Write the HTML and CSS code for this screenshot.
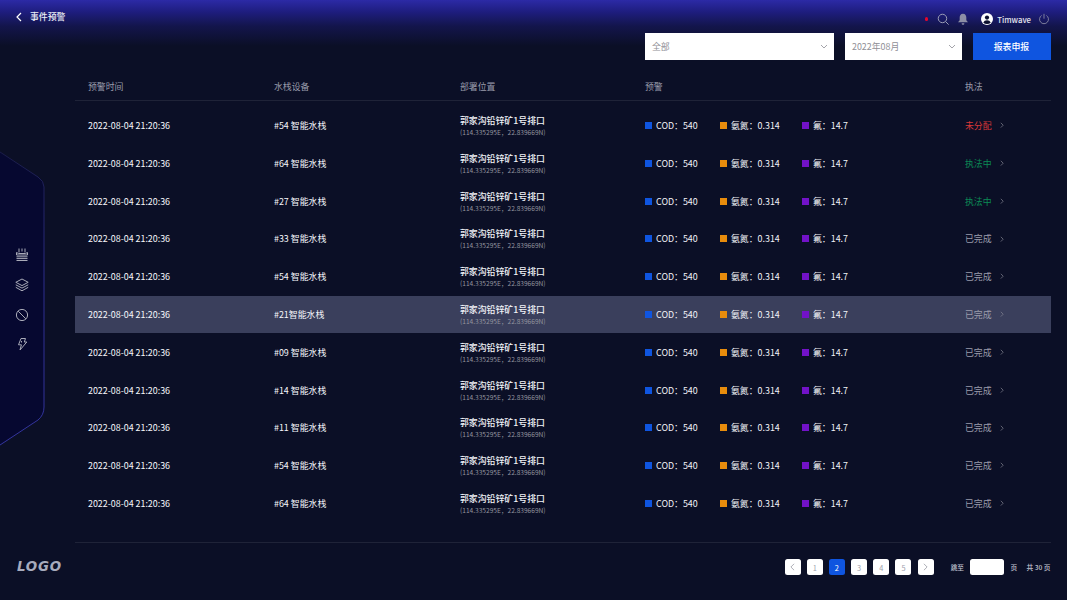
FILE: index.html
```html
<!DOCTYPE html>
<html lang="zh-CN">
<head>
<meta charset="utf-8">
<title>事件预警</title>
<link rel="stylesheet" href="styles.css">
</head>
<body>
<div class="page">
  <aside class="side">
    <svg class="side-shape" width="46" height="300" viewBox="0 0 46 300">
      <defs><linearGradient id="sideStroke" x1="0" y1="0" x2="0" y2="1"><stop offset="0" stop-color="#1a1c48"/><stop offset="0.45" stop-color="#2c2d8c"/><stop offset="1" stop-color="#33349e"/></linearGradient></defs>
      <path d="M0 1 L38 26 Q44 30 44 36 L44 256 Q44 264 38 269 L0 294 Z" fill="#060830"/>
      <path d="M0 1 L38 26 Q44 30 44 36 L44 256 Q44 264 38 269 L0 294" fill="none" stroke="url(#sideStroke)" stroke-width="1"/>
    </svg>
    <nav class="side-icons">
      <svg class="side-icon" viewBox="0 0 14 14"><path d="M4 0.5V4.5M7 0.5V3.5M10 0.5V4.5M1.5 4.5L3.5 5.5H10.5L12.5 4.5V7H1.5ZM1.5 8.8H12.5M1.5 10.6H12.5M1.5 12.5H12.5" /></svg>
      <svg class="side-icon" viewBox="0 0 14 14"><path d="M7 1L13.2 4.3L7 7.6L0.8 4.3ZM0.8 6.8L7 10.1L13.2 6.8M0.8 9.3L7 12.8L13.2 9.3"/></svg>
      <svg class="side-icon" viewBox="0 0 14 14"><circle cx="7" cy="7" r="5.6"/><path d="M3.2 3.2L10.8 10.8"/></svg>
      <svg class="side-icon" viewBox="0 0 14 14"><path d="M6 1.5H10.5L9.3 5H11.8L5 13L6.4 7.8H3.5Z M6.5 4V5.5"/></svg>
    </nav>
    <div class="logo">LOGO</div>
  </aside>
  <div class="main-wrap">
    <header class="top">
      <div class="top-left">
        <svg class="back" viewBox="0 0 8 10"><path d="M6 1L2 5L6 9"/></svg>
        <span class="title">事件预警</span>
      </div>
      <div class="top-right">
        <span class="dot"></span>
        <svg class="ti" viewBox="0.5 0.5 12.5 12.5"><circle cx="6.2" cy="6.2" r="4.4"/><path d="M9.5 9.5L12.6 12.6"/></svg>
        <svg class="ti bell" viewBox="0.5 0.5 13 13"><path d="M7 1.2C9.6 1.2 10.6 3.2 10.6 5.4V8.4L12.4 10.6H1.6L3.4 8.4V5.4C3.4 3.2 4.4 1.2 7 1.2ZM5.6 11.6H8.4V12.2C8.4 13 7.8 13.2 7 13.2C6.2 13.2 5.6 13 5.6 12.2Z"/></svg>
        <svg class="avatar" viewBox="0 0 12 12"><circle cx="6" cy="6" r="6" fill="#fff"/><circle cx="6" cy="4.6" r="2.1" fill="#0c1030"/><path d="M2.3 9.8C2.9 7.9 4.2 7.2 6 7.2C7.8 7.2 9.1 7.9 9.7 9.8C8.7 10.6 7.4 11 6 11C4.6 11 3.3 10.6 2.3 9.8Z" fill="#0c1030"/></svg>
        <span class="user">Timwave</span>
        <svg class="ti power" viewBox="0 0 14 14"><path d="M4.2 2.9A5.2 5.2 0 1 0 9.8 2.9M7 1V6.6"/></svg>
      </div>
    </header>
    <main class="main">
      <div class="controls">
        <div class="select sel-wide"><span>全部</span><svg class="caret" viewBox="0 0 8 5"><path d="M1 1L4 4L7 1"/></svg></div>
        <div class="select sel-date"><span>2022年08月</span><svg class="caret" viewBox="0 0 8 5"><path d="M1 1L4 4L7 1"/></svg></div>
        <button class="report">报表申报</button>
      </div>
      <div class="thead grid"><span>预警时间</span><span>水栈设备</span><span>部署位置</span><span>预警</span><span>执法</span></div>
      <div class="tbody">
        <div class="row grid"><span class="cell">2022-08-04 21:20:36</span><span class="cell">#54 智能水栈</span><div><div class="loc">郭家沟铅锌矿1号排口</div><div class="coord">(114.335295E，22.839669N)</div></div><div class="alerts"><span class="al al1"><i class="sq blue"></i>COD：540</span><span class="al al2"><i class="sq orange"></i>氨氮：0.314</span><span class="al"><i class="sq purple"></i>氟：14.7</span></div><div class="st"><span class="s s-red">未分配</span><svg class="chev" viewBox="0 0 5 8"><path d="M1 1L4 4L1 7"/></svg></div></div>
        <div class="row grid"><span class="cell">2022-08-04 21:20:36</span><span class="cell">#64 智能水栈</span><div><div class="loc">郭家沟铅锌矿1号排口</div><div class="coord">(114.335295E，22.839669N)</div></div><div class="alerts"><span class="al al1"><i class="sq blue"></i>COD：540</span><span class="al al2"><i class="sq orange"></i>氨氮：0.314</span><span class="al"><i class="sq purple"></i>氟：14.7</span></div><div class="st"><span class="s s-green">执法中</span><svg class="chev" viewBox="0 0 5 8"><path d="M1 1L4 4L1 7"/></svg></div></div>
        <div class="row grid"><span class="cell">2022-08-04 21:20:36</span><span class="cell">#27 智能水栈</span><div><div class="loc">郭家沟铅锌矿1号排口</div><div class="coord">(114.335295E，22.839669N)</div></div><div class="alerts"><span class="al al1"><i class="sq blue"></i>COD：540</span><span class="al al2"><i class="sq orange"></i>氨氮：0.314</span><span class="al"><i class="sq purple"></i>氟：14.7</span></div><div class="st"><span class="s s-green">执法中</span><svg class="chev" viewBox="0 0 5 8"><path d="M1 1L4 4L1 7"/></svg></div></div>
        <div class="row grid"><span class="cell">2022-08-04 21:20:36</span><span class="cell">#33 智能水栈</span><div><div class="loc">郭家沟铅锌矿1号排口</div><div class="coord">(114.335295E，22.839669N)</div></div><div class="alerts"><span class="al al1"><i class="sq blue"></i>COD：540</span><span class="al al2"><i class="sq orange"></i>氨氮：0.314</span><span class="al"><i class="sq purple"></i>氟：14.7</span></div><div class="st"><span class="s">已完成</span><svg class="chev" viewBox="0 0 5 8"><path d="M1 1L4 4L1 7"/></svg></div></div>
        <div class="row grid"><span class="cell">2022-08-04 21:20:36</span><span class="cell">#54 智能水栈</span><div><div class="loc">郭家沟铅锌矿1号排口</div><div class="coord">(114.335295E，22.839669N)</div></div><div class="alerts"><span class="al al1"><i class="sq blue"></i>COD：540</span><span class="al al2"><i class="sq orange"></i>氨氮：0.314</span><span class="al"><i class="sq purple"></i>氟：14.7</span></div><div class="st"><span class="s">已完成</span><svg class="chev" viewBox="0 0 5 8"><path d="M1 1L4 4L1 7"/></svg></div></div>
        <div class="row grid active"><span class="cell">2022-08-04 21:20:36</span><span class="cell">#21智能水栈</span><div><div class="loc">郭家沟铅锌矿1号排口</div><div class="coord">(114.335295E，22.839669N)</div></div><div class="alerts"><span class="al al1"><i class="sq blue"></i>COD：540</span><span class="al al2"><i class="sq orange"></i>氨氮：0.314</span><span class="al"><i class="sq purple"></i>氟：14.7</span></div><div class="st"><span class="s">已完成</span><svg class="chev" viewBox="0 0 5 8"><path d="M1 1L4 4L1 7"/></svg></div></div>
        <div class="row grid"><span class="cell">2022-08-04 21:20:36</span><span class="cell">#09 智能水栈</span><div><div class="loc">郭家沟铅锌矿1号排口</div><div class="coord">(114.335295E，22.839669N)</div></div><div class="alerts"><span class="al al1"><i class="sq blue"></i>COD：540</span><span class="al al2"><i class="sq orange"></i>氨氮：0.314</span><span class="al"><i class="sq purple"></i>氟：14.7</span></div><div class="st"><span class="s">已完成</span><svg class="chev" viewBox="0 0 5 8"><path d="M1 1L4 4L1 7"/></svg></div></div>
        <div class="row grid"><span class="cell">2022-08-04 21:20:36</span><span class="cell">#14 智能水栈</span><div><div class="loc">郭家沟铅锌矿1号排口</div><div class="coord">(114.335295E，22.839669N)</div></div><div class="alerts"><span class="al al1"><i class="sq blue"></i>COD：540</span><span class="al al2"><i class="sq orange"></i>氨氮：0.314</span><span class="al"><i class="sq purple"></i>氟：14.7</span></div><div class="st"><span class="s">已完成</span><svg class="chev" viewBox="0 0 5 8"><path d="M1 1L4 4L1 7"/></svg></div></div>
        <div class="row grid"><span class="cell">2022-08-04 21:20:36</span><span class="cell">#11 智能水栈</span><div><div class="loc">郭家沟铅锌矿1号排口</div><div class="coord">(114.335295E，22.839669N)</div></div><div class="alerts"><span class="al al1"><i class="sq blue"></i>COD：540</span><span class="al al2"><i class="sq orange"></i>氨氮：0.314</span><span class="al"><i class="sq purple"></i>氟：14.7</span></div><div class="st"><span class="s">已完成</span><svg class="chev" viewBox="0 0 5 8"><path d="M1 1L4 4L1 7"/></svg></div></div>
        <div class="row grid"><span class="cell">2022-08-04 21:20:36</span><span class="cell">#54 智能水栈</span><div><div class="loc">郭家沟铅锌矿1号排口</div><div class="coord">(114.335295E，22.839669N)</div></div><div class="alerts"><span class="al al1"><i class="sq blue"></i>COD：540</span><span class="al al2"><i class="sq orange"></i>氨氮：0.314</span><span class="al"><i class="sq purple"></i>氟：14.7</span></div><div class="st"><span class="s">已完成</span><svg class="chev" viewBox="0 0 5 8"><path d="M1 1L4 4L1 7"/></svg></div></div>
        <div class="row grid"><span class="cell">2022-08-04 21:20:36</span><span class="cell">#64 智能水栈</span><div><div class="loc">郭家沟铅锌矿1号排口</div><div class="coord">(114.335295E，22.839669N)</div></div><div class="alerts"><span class="al al1"><i class="sq blue"></i>COD：540</span><span class="al al2"><i class="sq orange"></i>氨氮：0.314</span><span class="al"><i class="sq purple"></i>氟：14.7</span></div><div class="st"><span class="s">已完成</span><svg class="chev" viewBox="0 0 5 8"><path d="M1 1L4 4L1 7"/></svg></div></div>
      </div>
      <footer class="foot">
        <span class="pg"><svg class="pg-arrow" viewBox="0 0 6 10"><path d="M5 1L1 5L5 9"/></svg></span>
        <span class="pg">1</span>
        <span class="pg cur">2</span>
        <span class="pg">3</span>
        <span class="pg">4</span>
        <span class="pg">5</span>
        <span class="pg"><svg class="pg-arrow" viewBox="0 0 6 10"><path d="M1 1L5 5L1 9"/></svg></span>
        <span class="jump">跳至</span>
        <span class="pg-input"></span>
        <span class="unit">页</span>
        <span class="total">共 30 页</span>
      </footer>
    </main>
  </div>
</div>
</body>
</html>
```
FILE: styles.css
```css
* { box-sizing: border-box; }
html, body { margin: 0; height: 100%; }
body {
  background: #0b0f26;
  font-family: "Noto Sans CJK SC", "Noto Sans", sans-serif;
  color: #fff;
  overflow: hidden;
}
.page {
  width: 1067px;
  height: 600px;
  display: flex;
  background: linear-gradient(180deg, #2c2aa6 0, #1e1d7e 12px, #13154c 26px, #0b0f26 46px);
}
.side {
  width: 74.5px;
  flex: none;
  position: relative;
  display: flex;
  flex-direction: column;
  align-items: flex-start;
  padding: 248px 0 0 15px;
}
.side-shape { position: absolute; left: 0; top: 151px; }
.side-icons { position: relative; display: flex; flex-direction: column; gap: 15.8px; }
.side-icon { width: 14px; height: 14px; display: block; fill: none; stroke: #a9abb8; stroke-width: 1; }
.logo {
  margin-top: auto;
  margin-bottom: 26px;
  margin-left: 2px;
  font-family: "DejaVu Sans", sans-serif;
  font-weight: 700;
  font-style: italic;
  font-size: 13.4px;
  line-height: 14px;
  letter-spacing: 0.8px;
  color: #a7abbd;
}
.main-wrap { flex: 1; min-width: 0; display: flex; flex-direction: column; }
.top {
  height: 33px;
  flex: none;
  display: flex;
  justify-content: space-between;
  align-items: flex-start;
  padding-top: 10px;
  padding-right: 17px;
  margin-left: -74.5px;
  padding-left: 15px;
}
.top-left { display: flex; align-items: center; height: 14px; }
.back { width: 8px; height: 10px; fill: none; stroke: #fff; stroke-width: 1.2; margin-right: 7px; }
.title { font-size: 8.9px; font-weight: 500; line-height: 14px; color: #eceef6; }
.top-right { display: flex; align-items: center; height: 16px; margin-top: 1px; }
.dot { width: 3.5px; height: 3.5px; border-radius: 50%; background: #e5062d; margin-right: 8.5px; }
.ti { width: 12px; height: 12px; fill: none; stroke: #a0a2b8; stroke-width: 1; }
.bell { margin-left: 8px; fill: #8d8fa6; stroke: none; }
.avatar { width: 12px; height: 12px; margin-left: 12.5px; }
.user { font-size: 7.8px; font-weight: 500; margin-left: 4px; color: #e6e7ef; }
.power { margin-left: 7px; stroke: #8d8fa6; }
.main { flex: 1; display: flex; flex-direction: column; padding-right: 16.5px; min-height: 0; }
.controls { display: flex; justify-content: flex-end; height: 27px; flex: none; }
.select {
  background: #fff;
  color: #8f8f96;
  font-size: 8.9px;
  display: flex;
  align-items: center;
  justify-content: space-between;
  padding: 0 6px 0 7px;
}
.sel-wide { width: 189px; margin-right: 11px; }
.sel-date { width: 117px; margin-right: 10.5px; }
.caret { width: 8px; height: 5px; fill: none; stroke: #9a9aa0; stroke-width: 0.9; }
.report {
  width: 78px;
  border: 0;
  padding: 0;
  background: #0f55e0;
  color: #fff;
  font-family: inherit;
  font-size: 8.9px;
  font-weight: 500;
}
.grid { display: grid; grid-template-columns: 186px 186px 185px 320px 1fr; padding-left: 13.5px; align-items: center; }
.thead {
  height: 41px;
  flex: none;
  font-size: 8.9px;
  color: #9a9cab;
  border-bottom: 1px solid #1f2338;
  padding-top: 13px;
  padding-bottom: 1px;
  margin-bottom: 5.6px;
}
.tbody { flex: none; }
.row { height: 37.8px; }
.row.active { background: #3a3f5c; }
.cell { font-size: 8.9px; font-weight: 400; color: #f6f7fb; }
.loc { font-size: 8.9px; font-weight: 500; line-height: 13px; color: #f2f3f8; }
.coord { font-size: 6.6px; line-height: 10px; color: #93959f; }
.alerts { display: flex; font-size: 8.9px; font-weight: 400; color: #f2f3f8; }
.al { display: flex; align-items: center; }
.al1 { width: 75px; }
.al2 { width: 82px; }
.sq { width: 7px; height: 7px; margin-right: 4px; flex: none; }
.blue { background: #0f55e0; }
.orange { background: #e88c0c; }
.purple { background: #7212c8; }
.st { display: flex; align-items: center; }
.s { font-size: 8.9px; width: 34.5px; color: #9a9cab; }
.s-red { color: #d93838; }
.s-green { color: #0b8a55; }
.chev { width: 4px; height: 6.4px; fill: none; stroke: #80828f; stroke-width: 0.9; }
.foot {
  border-top: 1px solid #1f2338;
  height: 40px;
  flex: none;
  margin-top: auto;
  margin-bottom: 18px;
  display: flex;
  align-items: center;
  justify-content: flex-end;
  padding-top: 9px;
  font-size: 6.7px;
  color: #c4c6d2;
}
.pg {
  width: 16px;
  height: 16px;
  border-radius: 2.5px;
  background: #fff;
  color: #a0a2ad;
  display: flex;
  align-items: center;
  justify-content: center;
  font-size: 7.4px;
  margin-right: 6.2px;
}
.pg.cur { background: #0f55e0; color: #fff; }
.pg-arrow { width: 5px; height: 8px; fill: none; stroke: #8e909a; stroke-width: 0.9; }
.jump { margin-left: 10.8px; margin-right: 6px; font-weight: 500; }
.pg-input { width: 33.5px; height: 16px; background: #fff; border-radius: 2.5px; }
.unit { margin-left: 7px; margin-right: 9.3px; font-weight: 500; }
.total { font-weight: 500; }
```
